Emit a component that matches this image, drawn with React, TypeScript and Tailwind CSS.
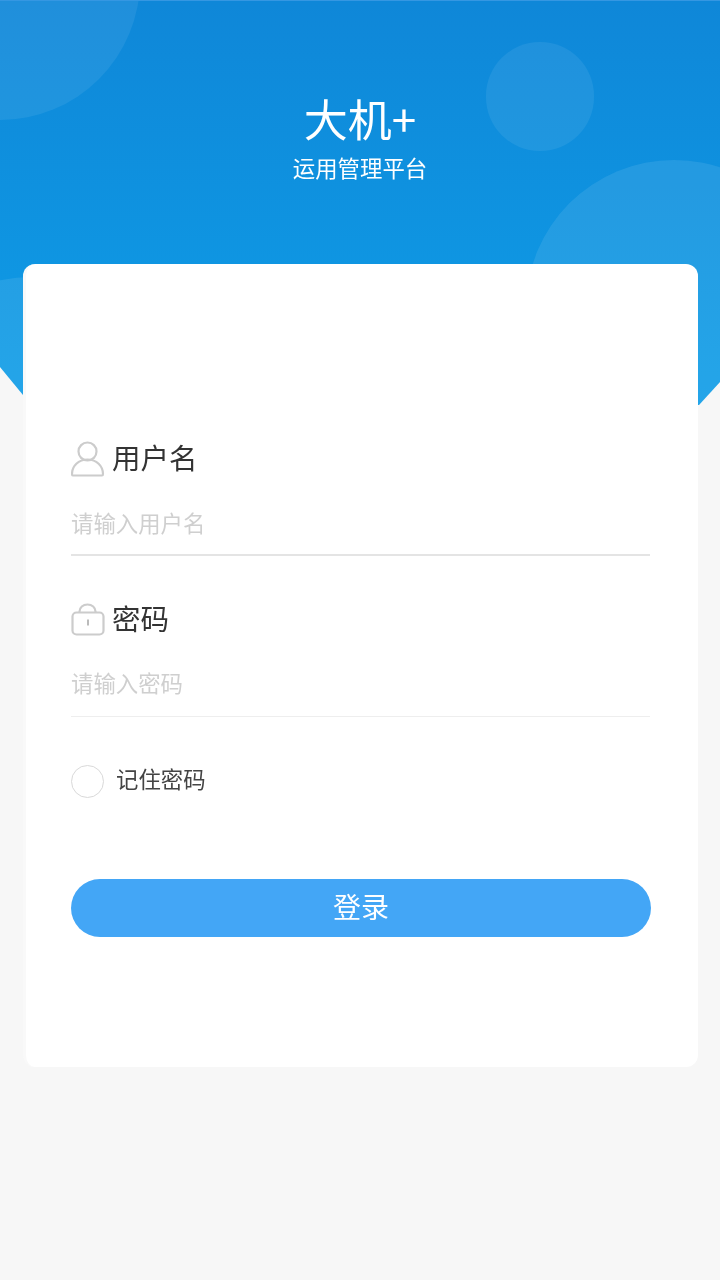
import React from 'react';

const cjk = { fontFamily: '"Noto Sans CJK SC", "Noto Sans", sans-serif' };

const UserIcon = () => (
  <svg width="34" height="36" viewBox="0 0 34 36" fill="none" stroke="#cccccc" strokeWidth="2.2">
    <circle cx="16.500" cy="10.500" r="9" />
    <path d="M2 34.500h29c0.800 0 1-0.600 1-1.400C32 25 25.500 18.500 16.500 18.500S1 25 1 33.100c0 0.800 0.200 1.400 1 1.400z" />
  </svg>
);

const LockIcon = () => (
  <svg width="34" height="34" viewBox="0 0 34 34" fill="none" stroke="#cccccc" strokeWidth="2.2">
    <rect x="1.500" y="9.500" width="31" height="22" rx="4" />
    <path d="M8.500 9.500V8.500C8.500 4.500 12 1.500 16.500 1.500s8 3 8 7v1" />
    <path d="M17 16.500v6" strokeWidth="1.600" stroke="#aaaaaa" />
  </svg>
);

const Field = ({ icon, label, placeholder, line }: { icon: React.ReactNode; label: string; placeholder: string; line: string }) => (
  <div className="w-[579px]">
    <div className="flex h-[36px] items-center">
      <span className="flex w-[41px] shrink-0">{icon}</span>
      <span className="mt-[-4px] text-[28.500px] leading-[36px] text-[#333333]">{label}</span>
    </div>
    <input
      readOnly
      placeholder={placeholder}
      style={cjk}
      className={`mt-[13px] block w-full bg-transparent text-[22.400px] outline-none placeholder:text-[#cfcfcf] ${line}`}
    />
  </div>
);

export default function App() {
  return (
    <div className="relative h-[1280px] w-[720px] overflow-hidden bg-[#f7f7f7] blur-[0.5px]" style={cjk}>
      {/* blue header with the cut corners */}
      <div className="relative h-[405px] overflow-hidden border-t border-t-[#3597e2] bg-gradient-to-b from-[#0f87d8] to-[#0f9de7] [clip-path:polygon(0_0,100%_0,100%_382px,699px_405px,23px_395px,0_367px)]">
        <div className="absolute left-[-140px] top-[-161px] h-[280px] w-[280px] rounded-full bg-white/[0.07]" />
        <div className="absolute left-[486px] top-[41px] h-[109px] w-[108px] rounded-full bg-white/[0.07]" />
        <div className="absolute left-[526px] top-[159px] h-[296px] w-[296px] rounded-full bg-white/[0.09]" />
        <div className="absolute left-[-119px] top-[276px] h-[300px] w-[300px] rounded-full bg-white/[0.09]" />
        <div className="relative flex flex-col items-center pt-[88px] text-white">
          <div className="text-[44px] font-normal leading-[58px]">大机+</div>
          <div className="mt-[4px] text-[22.400px] leading-[32px]">运用管理平台</div>
        </div>
      </div>

      {/* login card */}
      <div className="relative mt-[-141px] ml-[23px] h-[803px] w-[675px] rounded-[12px] border-l-[3px] border-l-[#f9f9f9] bg-white px-[45px] pt-[177px]">
        <Field icon={<UserIcon />} label="用户名" placeholder="请输入用户名" line="h-[66px] border-b-2 border-b-[#e4e4e4]" />
        <div className="mt-[46px]">
          <Field icon={<LockIcon />} label="密码" placeholder="请输入密码" line="h-[66px] border-b border-b-[#eeeeee] pb-[3px]" />
        </div>
        <div className="mt-[48px] flex items-center">
          <span className="h-[33px] w-[33px] rounded-full border border-[#d9d9d9]" />
          <span className="ml-[12px] mt-[-7px] text-[22.400px] leading-[32px] text-[#444444]">记住密码</span>
        </div>
        <button className="mt-[81px] block h-[58px] w-[580px] rounded-full bg-[#43a6f6] pb-[4px] text-[28px] text-white">登录</button>
      </div>
    </div>
  );
}
